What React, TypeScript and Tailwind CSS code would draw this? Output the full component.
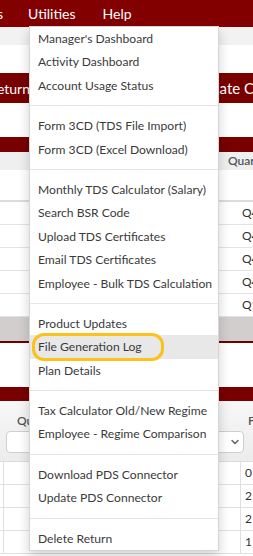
import { ChevronDown } from "lucide-react";

const groups: string[][] = [
  ["Manager's Dashboard", "Activity Dashboard", "Account Usage Status"],
  ["Form 3CD (TDS File Import)", "Form 3CD (Excel Download)"],
  [
    "Monthly TDS Calculator (Salary)",
    "Search BSR Code",
    "Upload TDS Certificates",
    "Email TDS Certificates",
    "Employee - Bulk TDS Calculation",
  ],
  ["Product Updates", "File Generation Log", "Plan Details"],
  ["Tax Calculator Old/New Regime", "Employee - Regime Comparison"],
  ["Download PDS Connector", "Update PDS Connector"],
  ["Delete Return"],
];

const quarters = ["Q4 2023-24", "Q4 2023-24", "Q4 2023-24", "Q4 2023-24", "Q1 2024-25"];
const lowerRows = ["0", "2", "2", "1"];

function UtilitiesMenu() {
  return (
    <div className="absolute left-[29px] top-[26px] z-10 w-[190px] border border-[#d6d6d6] bg-white shadow-[0_5px_11px_rgba(0,0,0,0.18)]">
      {groups.map((items, gi) => (
        <div key={gi}>
          {gi > 0 && <div className="my-[8px] h-px bg-[#e5e5e5]" />}
          {items.map((label) => {
            const active = label === "File Generation Log";
            return (
              <div
                key={label}
                className={
                  active
                    ? "relative h-[23.4px] whitespace-nowrap bg-[#e8e8e8] pl-[8px] text-[12.1px] leading-[23.4px] text-[#3a3a3a]"
                    : "h-[23.4px] whitespace-nowrap pl-[8px] text-[12.1px] leading-[23.4px] text-[#3a3a3a]"
                }
              >
                {label}
                {active && (
                  <div className="absolute left-[2px] top-[-2px] h-[28px] w-[132px] rounded-[12px] border-[3px] border-[#fcc21b]" />
                )}
              </div>
            );
          })}
        </div>
      ))}
    </div>
  );
}

export default function App() {
  return (
    <div className="relative h-[556px] w-[253px] overflow-hidden bg-white font-['Lato',sans-serif]">
      {/* main nav */}
      <div className="flex h-[27px] items-center bg-[#830000] text-[14px] text-white">
        <div className="flex w-[3px] shrink-0 justify-end">
          <span className="whitespace-nowrap">Masters</span>
        </div>
        <span className="ml-[25px]">Utilities</span>
        <span className="ml-[27px]">Help</span>
      </div>
      <div className="h-[18px] bg-[#f2f2f2]" />
      <div className="h-[28px]" />

      {/* action buttons */}
      <div className="flex h-[30px] text-white">
        <div className="flex w-[40px] shrink-0 items-center justify-end bg-[#780000] pr-[10px] text-[14px]">
          <span className="whitespace-nowrap">Return</span>
        </div>
        <div className="ml-auto flex w-[63px] shrink-0 items-center bg-[#780000] pl-[2px] text-[15px]">
          <span className="whitespace-nowrap">Update Challan</span>
        </div>
      </div>
      <div className="h-[34px]" />

      {/* upper table */}
      <div className="h-[15px] bg-[#780000]" />
      <div className="flex h-[18px] items-center bg-[#efefef] text-[12px] font-semibold text-[#555]">
        <span className="ml-auto w-[25px] whitespace-nowrap">Quarter</span>
      </div>
      <div className="h-[30px]" />
      <div className="border-t-2 border-[#dcdcdc]">
        {quarters.map((q, i) => (
          <div key={i} className="flex h-[23px] items-center border-b border-[#e3e3e3] text-[12px] text-[#333]">
            <span className="ml-auto w-[11px] whitespace-nowrap">{q}</span>
          </div>
        ))}
      </div>
      <div className="h-[26px] border-b-2 border-[#6e0000] bg-[#d3cece]" />
      <div className="h-[44px]" />

      {/* lower table */}
      <div className="h-[14px] bg-[#780000]" />
      <div className="flex h-[61px] border-b border-[#dcdcdc] bg-gradient-to-b from-[#f7f7f7] to-[#ececec] text-[12px] font-semibold text-[#555]">
        <div className="w-[244px] shrink-0 pl-[6px] pt-[13px]">
          <div className="pl-[11px] leading-[14px]">Quarter</div>
          <div className="mt-[3px] flex h-[22px] items-center justify-end rounded-[4px] border border-[#cfcfcf] bg-white pr-[2px]">
            <ChevronDown size={12} strokeWidth={3} className="text-[#666]" />
          </div>
        </div>
        <div className="pl-[4px] pt-[13px] leading-[14px]">
          <span className="whitespace-nowrap">Financial Year</span>
        </div>
      </div>
      {lowerRows.map((v, i) => (
        <div key={i} className="flex h-[23px] border-b border-[#e0e0e0] text-[12px] text-[#333]">
          <div className="w-[3px] shrink-0" />
          <div className="w-[238px] shrink-0 border-x border-[#e0e0e0]" />
          <div className="flex items-center pl-[4px]">
            <span className="whitespace-nowrap">{v}</span>
          </div>
        </div>
      ))}

      <UtilitiesMenu />
    </div>
  );
}
